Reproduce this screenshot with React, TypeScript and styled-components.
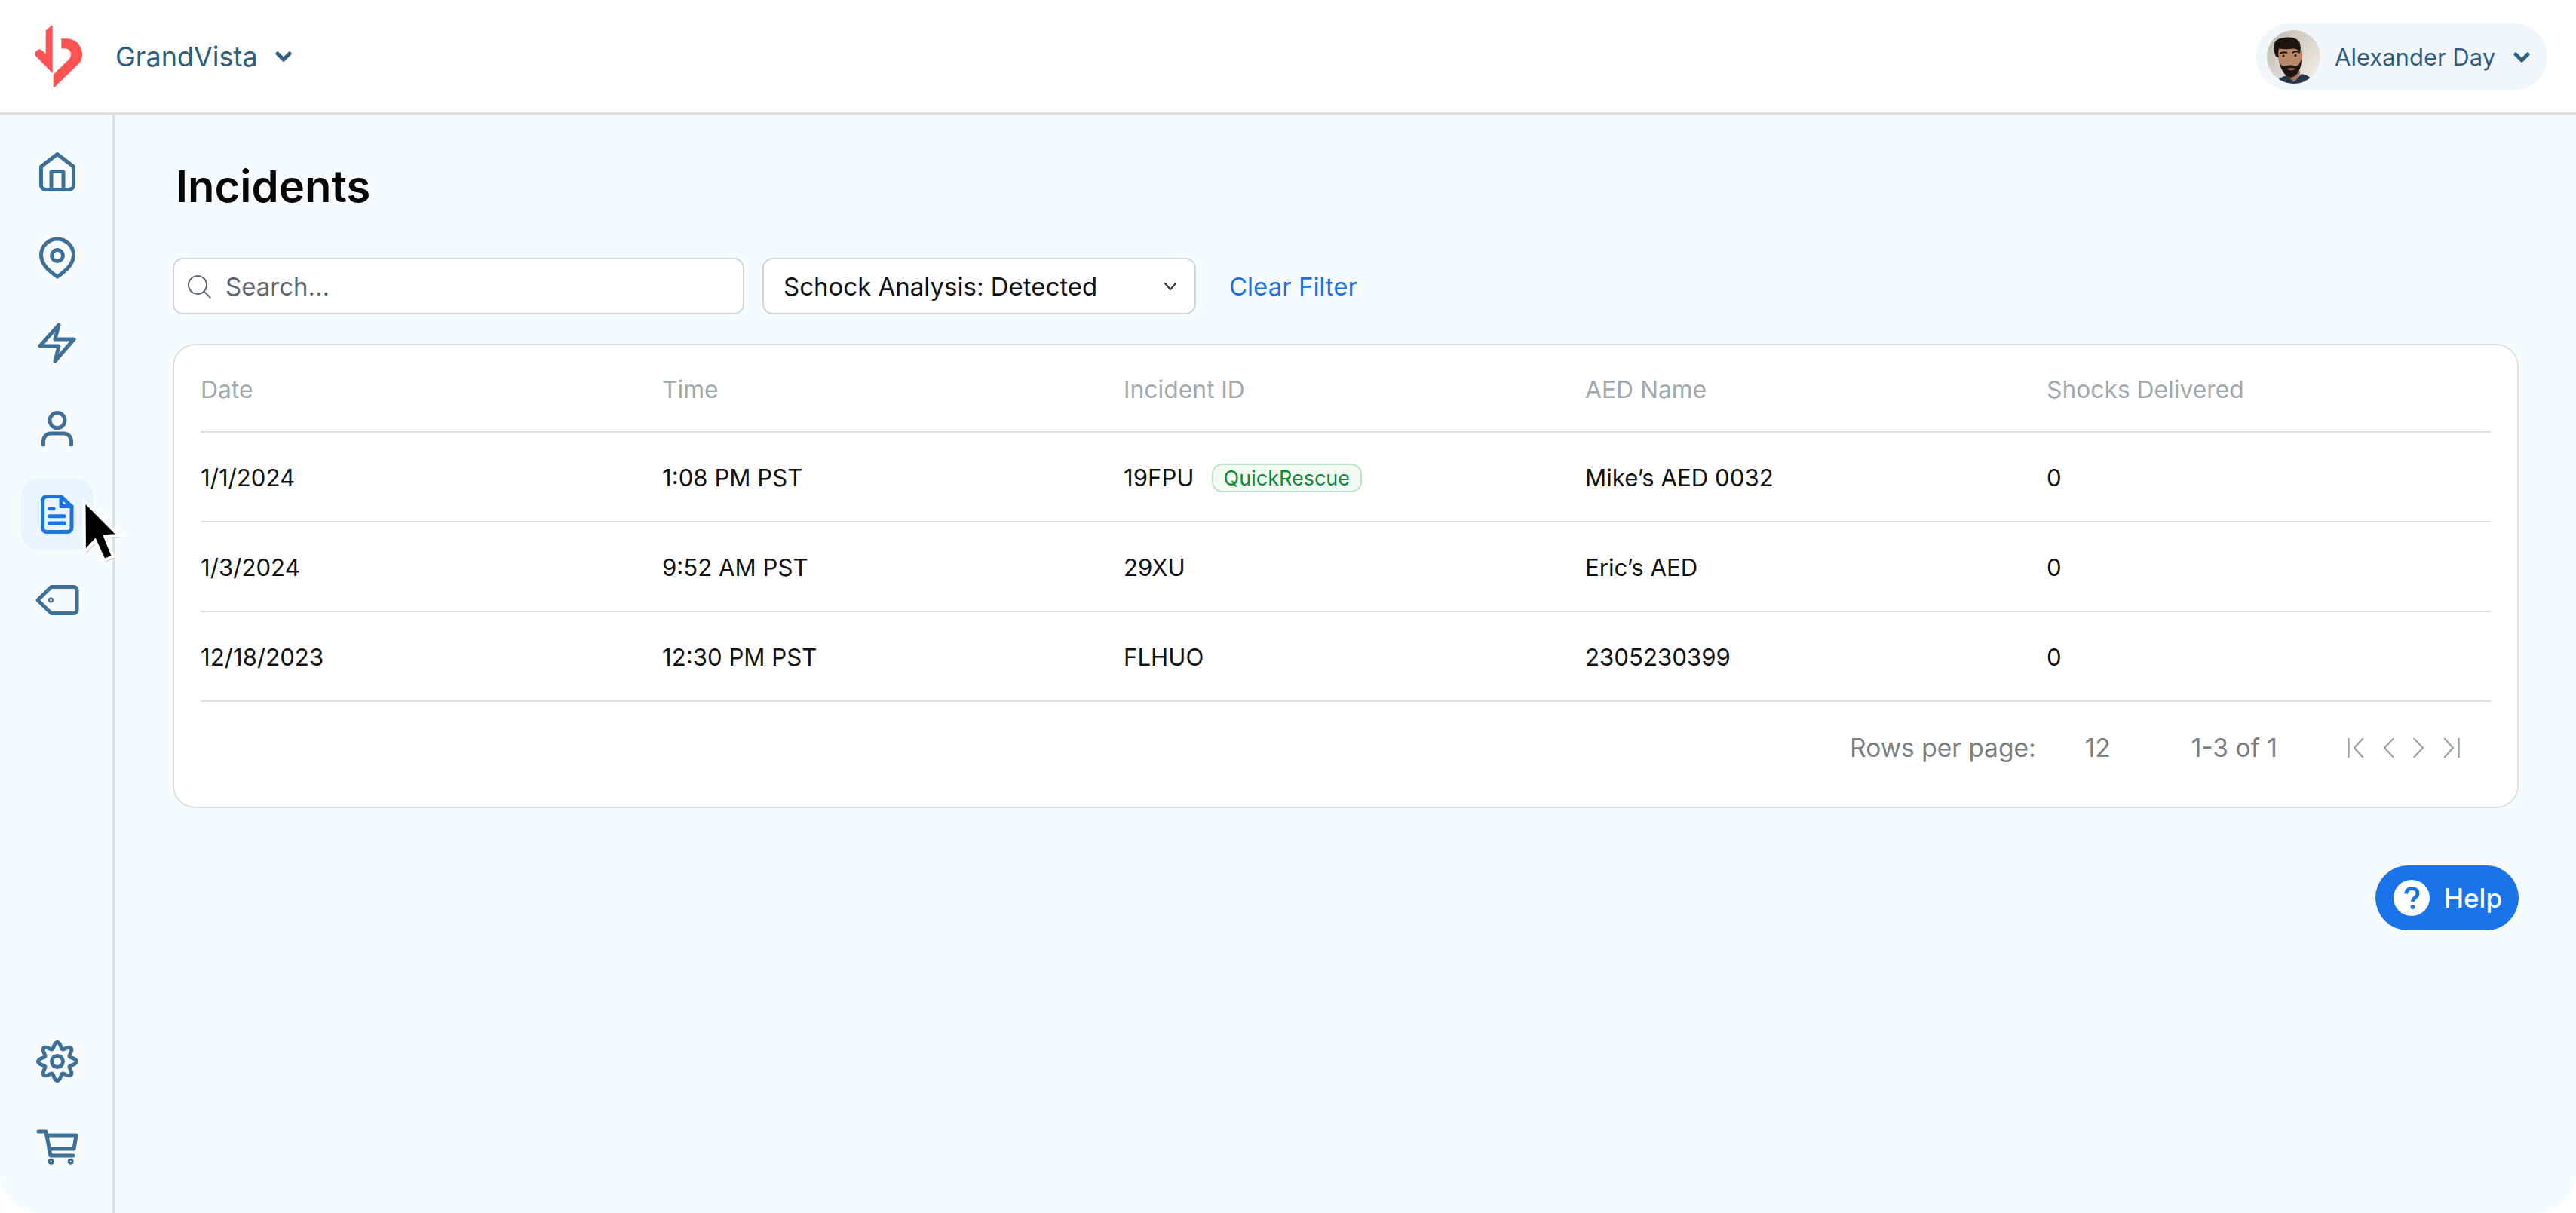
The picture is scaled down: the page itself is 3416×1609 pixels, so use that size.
import styled, { createGlobalStyle } from "styled-components";

const GlobalStyle = createGlobalStyle`
  html, body {
    margin: 0;
    padding: 0;
    background: #fff;
  }
  * {
    box-sizing: border-box;
  }
`;

const Frame = styled.div`
  position: relative;
  width: 3416px;
  height: 1609px;
  background: #f8fbfe;
  border-radius: 0 0 50px 50px;
  overflow: hidden;
  display: flex;
  flex-direction: column;
  font-family: Inter, "Liberation Sans", sans-serif;
  color: #111;
`;

const TopBar = styled.header`
  height: 152px;
  flex: none;
  background: #fff;
  border-bottom: 3px solid #dcdfe0;
  display: flex;
  align-items: center;
  padding: 0 38px 0 45px;
`;

const OrgName = styled.span`
  margin-left: 43px;
  font-size: 36px;
  color: #2b5f83;
`;

const OrgChevron = styled.svg`
  margin-left: 23px;
  width: 22px;
  height: 14px;
`;

const UserPill = styled.div`
  margin-left: auto;
  margin-top: 2px;
  width: 386px;
  height: 89px;
  border-radius: 45px;
  background: #f2f6fa;
  display: flex;
  align-items: center;
  padding-left: 14px;
`;

const Avatar = styled.svg`
  width: 71px;
  height: 71px;
  border-radius: 50%;
  flex: none;
`;

const UserName = styled.span`
  margin-left: 19px;
  font-size: 31px;
  color: #2b5f83;
  white-space: nowrap;
`;

const UserChevron = styled.svg`
  margin-left: 24px;
  width: 22px;
  height: 14px;
`;

const Body = styled.div`
  flex: 1;
  display: flex;
  min-height: 0;
`;

const Side = styled.nav`
  width: 152px;
  flex: none;
  border-right: 3px solid #dcdfe0;
  padding: 28px 0 39px 28px;
  display: flex;
  flex-direction: column;
  gap: 17.6px;
`;

const NavItem = styled.div<{ $active?: boolean }>`
  width: 96px;
  height: 96px;
  flex: none;
  border-radius: 24px;
  display: flex;
  align-items: center;
  justify-content: center;
  background: ${(p) => (p.$active ? "#e9f4ff" : "transparent")};
  color: ${(p) => (p.$active ? "#1a73e8" : "#3c7099")};
  svg {
    display: block;
    fill: none;
    stroke: currentColor;
    stroke-width: 5;
    stroke-linecap: round;
    stroke-linejoin: round;
  }
`;

const SideSpacer = styled.div`
  flex: 1;
`;

const Main = styled.main`
  flex: 1;
  min-width: 0;
  padding: 63px 76px 0 77px;
`;

const Title = styled.h1`
  margin: 0;
  height: 64px;
  font-size: 58px;
  line-height: 64px;
  font-weight: 600;
  color: #060606;
  padding-left: 4px;
`;

const Toolbar = styled.div`
  margin-top: 63px;
  display: flex;
  align-items: center;
  gap: 24px;
`;

const SearchBox = styled.div`
  width: 758px;
  height: 75px;
  background: #fff;
  border: 2px solid #cfd5dc;
  border-radius: 14px;
  display: flex;
  align-items: center;
  padding-left: 17px;
  font-size: 33px;
  color: #5d6873;
  svg {
    margin-right: 19px;
  }
`;

const FilterSelect = styled.div`
  width: 575px;
  height: 75px;
  background: #fff;
  border: 2px solid #cfd5dc;
  border-radius: 14px;
  display: flex;
  align-items: center;
  justify-content: space-between;
  padding: 0 23px 0 26px;
  font-size: 33px;
  color: #111;
`;

const ClearFilter = styled.a`
  margin-left: 20px;
  font-size: 33px;
  color: #1a6fe3;
`;

const Card = styled.section`
  margin-top: 39px;
  height: 616px;
  background: #fff;
  border: 2px solid #dedfe0;
  border-radius: 30px;
  padding: 0 35px;
`;

const Row = styled.div<{ $head?: boolean }>`
  height: ${(p) => (p.$head ? "116px" : "119px")};
  padding-top: 3px;
  display: grid;
  grid-template-columns: repeat(4, 612px) 1fr;
  align-items: center;
  border-bottom: 2px solid #dedfe0;
  font-size: ${(p) => (p.$head ? "31.8px" : "31.2px")};
  color: ${(p) => (p.$head ? "#a0a9ae" : "#111")};
`;

const IdCell = styled.div`
  display: flex;
  align-items: center;
  gap: 23px;
`;

const Badge = styled.span`
  height: 38px;
  padding: 0 14px;
  display: inline-flex;
  align-items: center;
  border: 2px solid #b9e4c6;
  border-radius: 14px;
  background: #f1faf3;
  color: #0b8c3a;
  font-size: 27px;
`;

const Pager = styled.div`
  height: 122px;
  display: flex;
  align-items: center;
  font-size: 33.5px;
  color: #7b7f80;
`;

const RowsLabel = styled.span`
  margin-left: auto;
`;

const RowsValue = styled.span`
  margin-left: 65px;
`;

const RangeLabel = styled.span`
  margin-left: 107px;
`;

const PagerIcons = styled.div`
  margin-left: 93px;
  margin-right: 41px;
  display: flex;
  align-items: center;
  gap: 25px;
  svg {
    display: block;
    fill: none;
    stroke: #9aa6a9;
    stroke-width: 2.5;
    stroke-linecap: round;
    stroke-linejoin: round;
  }
`;

const HelpRow = styled.div`
  margin-top: 76px;
  display: flex;
  justify-content: flex-end;
`;

const HelpButton = styled.button`
  width: 190px;
  height: 86px;
  border: 0;
  border-radius: 43px;
  background: #1a73e8;
  color: #fff;
  display: flex;
  align-items: center;
  padding: 0 0 0 24px;
  gap: 19px;
  font-family: inherit;
  font-size: 35px;
  font-weight: 500;
`;

const Pointer = styled.svg`
  position: absolute;
  left: 104px;
  top: 658px;
  width: 64px;
  height: 92px;
`;

const columns = ["Date", "Time", "Incident ID", "AED Name", "Shocks Delivered"];

const incidents = [
  { date: "1/1/2024", time: "1:08 PM PST", id: "19FPU", aed: "Mike’s AED 0032", shocks: "0", quick: true },
  { date: "1/3/2024", time: "9:52 AM PST", id: "29XU", aed: "Eric’s AED", shocks: "0" },
  { date: "12/18/2023", time: "12:30 PM PST", id: "FLHUO", aed: "2305230399", shocks: "0" },
];

// rounded 8 tooth outline for the settings icon
const gearPath = () => {
  const pts: string[] = [];
  for (let i = 0; i < 144; i++) {
    const a = (i / 144) * Math.PI * 2;
    const r = 21.5 + 4 * Math.cos(8 * a);
    pts.push(`${(29 + r * Math.sin(a)).toFixed(2)} ${(29 - r * Math.cos(a)).toFixed(2)}`);
  }
  return `M${pts.join("L")}Z`;
};

const Chevron = () => (
  <path d="M3 3l8 8 8-8" fill="none" stroke="#2b5f83" strokeWidth="5" strokeLinecap="round" strokeLinejoin="round" />
);

export default function App() {
  return (
    <>
      <GlobalStyle />
      <Frame>
        <TopBar>
          <svg width="65" height="86" viewBox="46 33 65 86">
            <path
              fill="#ff5252"
              d="M61.7 41.7L69 35Q70.7 33.5 70.7 36V98.3L48.5 75.5Q46 72 48.5 69L51 67Q54 65 57 68L61.7 72.5Z"
            />
            <path
              fill="#ff5252"
              d="M82.3 52.3H90C101 52.3 110 62 110 73C110 79 108 83 105 86L73 117Q71.7 118 71.7 116V100L93 79C97 74 95 66 88 65.5H82.3Z"
            />
          </svg>
          <OrgName>GrandVista</OrgName>
          <OrgChevron viewBox="0 0 22 14">
            <Chevron />
          </OrgChevron>
          <UserPill>
            <Avatar viewBox="0 0 71 71">
              <defs>
                <linearGradient id="wall" x1="0" y1="0" x2="1" y2="1">
                  <stop offset="0" stopColor="#bdb9b0" />
                  <stop offset="0.55" stopColor="#dbd8d1" />
                  <stop offset="1" stopColor="#f6f4ef" />
                </linearGradient>
              </defs>
              <rect width="71" height="71" fill="url(#wall)" />
              <path d="M12 71C14 64 22 60 30 60L36 68L46 58C52 59 56 61 58 64V71Z" fill="#27354f" />
              <path d="M26 54H44V59L36 68L27 61Z" fill="#a8755c" />
              <path d="M14 28C14 20 46 20 47 30C48 42 44 56 33 62C22 60 15 45 14 28Z" fill="#bb8769" />
              <path d="M16 40C18 46 20 48 24 48C28 46 34 46 38 48C42 47 44 44 46 38C46 50 42 60 32 63C24 62 18 52 16 40Z" fill="#1e1611" />
              <path d="M27 51C30 50 35 50 38 51C36 54 29 54 27 51Z" fill="#a9615a" />
              <path d="M17 31C20 29 24 29 27 30M34 30C37 28 41 28 44 30" stroke="#1b120c" strokeWidth="2" fill="none" />
              <circle cx="22" cy="34" r="1.600" fill="#1b120c" />
              <circle cx="38" cy="33.500" r="1.600" fill="#1b120c" />
              <path d="M12 35C7 22 9 13 18 11C28 8 42 9 44 18C45 22 45 26 44 29C40 24 36 24 30 25C24 26 18 24 16 25C15 28 15 32 16 36Z" fill="#1c1512" />
            </Avatar>
            <UserName>Alexander Day</UserName>
            <UserChevron viewBox="0 0 22 14">
              <Chevron />
            </UserChevron>
          </UserPill>
        </TopBar>
        <Body>
          <Side>
            <NavItem>
              <svg width="48" height="52" viewBox="0 0 48 52">
                <path d="M24 2.500L45.500 19V43a6 6 0 0 1-6 6.500H8.500a6 6 0 0 1-6-6.500V19Z" />
                <path d="M16 49V27a1.500 1.500 0 0 1 1.500-1.500h13A1.500 1.500 0 0 1 32 27v22" />
              </svg>
            </NavItem>
            <NavItem>
              <svg width="48" height="56" viewBox="0 0 48 56">
                <path d="M24 53C14 46 2.500 37 2.500 24.500A21.500 21.500 0 0 1 45.500 24.500C45.500 37 34 46 24 53Z" />
                <circle cx="24" cy="25" r="7.500" />
              </svg>
            </NavItem>
            <NavItem>
              <svg width="52" height="54" viewBox="0 0 52 54">
                <path d="M28 3L3 31H28L23 51L48 22H23Z" />
              </svg>
            </NavItem>
            <NavItem>
              <svg width="52" height="49" viewBox="0 0 52 49">
                <circle cx="26" cy="13.600" r="10" />
                <path d="M7.500 46V41a10 10 0 0 1 10-10H34.500a10 10 0 0 1 10 10V46" />
              </svg>
            </NavItem>
            <NavItem $active>
              <svg width="44" height="52" viewBox="0 0 44 52">
                <path d="M8 2.500H27L41 16V44a5.500 5.500 0 0 1-5.500 5.500H8A5.500 5.500 0 0 1 2.500 44V8A5.500 5.500 0 0 1 8 2.500Z" />
                <path d="M27 3V15.500H41" />
                <path d="M12 18.700H17M12 28.700H31M12 38H31" />
              </svg>
            </NavItem>
            <NavItem>
              <svg width="58" height="42" viewBox="0 0 58 42">
                <path d="M3 21L21 3.500H51a4 4 0 0 1 4 4V34.500a4 4 0 0 1-4 4H21Z" />
                <circle cx="20.500" cy="21" r="1" />
              </svg>
            </NavItem>
            <SideSpacer />
            <NavItem>
              <svg width="58" height="58" viewBox="0 0 58 58">
                <path d={gearPath()} />
                <circle cx="29" cy="29" r="7.500" />
              </svg>
            </NavItem>
            <NavItem>
              <svg width="56" height="48" viewBox="0 0 56 48">
                <path d="M3 3H13L19 35H49" />
                <path d="M14 8H53L50 26H17" />
                <circle cx="19.700" cy="42.700" r="1.500" />
                <circle cx="45.700" cy="42.700" r="1.500" />
              </svg>
            </NavItem>
          </Side>
          <Main>
            <Title>Incidents</Title>
            <Toolbar>
              <SearchBox>
                <svg width="32" height="32" viewBox="0 0 24 24" fill="none" stroke="#5d6873" strokeWidth="1.500" strokeLinecap="round">
                  <circle cx="10.500" cy="10.500" r="9" />
                  <path d="M17 17l6 6" />
                </svg>
                Search...
              </SearchBox>
              <FilterSelect>
                Schock Analysis: Detected
                <svg width="18" height="12" viewBox="0 0 18 12" fill="none" stroke="#333" strokeWidth="2" strokeLinecap="round" strokeLinejoin="round">
                  <path d="M2 2l7 8 7-8" />
                </svg>
              </FilterSelect>
              <ClearFilter>Clear Filter</ClearFilter>
            </Toolbar>
            <Card>
              <Row $head>
                {columns.map((c) => (
                  <div key={c}>{c}</div>
                ))}
              </Row>
              {incidents.map((row) => (
                <Row key={row.id}>
                  <div>{row.date}</div>
                  <div>{row.time}</div>
                  <IdCell>
                    {row.id}
                    {row.quick && <Badge>QuickRescue</Badge>}
                  </IdCell>
                  <div>{row.aed}</div>
                  <div>{row.shocks}</div>
                </Row>
              ))}
              <Pager>
                <RowsLabel>Rows per page:</RowsLabel>
                <RowsValue>12</RowsValue>
                <RangeLabel>1-3 of 1</RangeLabel>
                <PagerIcons>
                  <svg width="22" height="28" viewBox="0 0 22 28">
                    <path d="M1.500 2V26M20 2L9 14L20 26" />
                  </svg>
                  <svg width="15" height="28" viewBox="0 0 15 28">
                    <path d="M13.500 2L2 14L13.500 26" />
                  </svg>
                  <svg width="15" height="28" viewBox="0 0 15 28">
                    <path d="M1.500 2L13 14L1.500 26" />
                  </svg>
                  <svg width="22" height="28" viewBox="0 0 22 28">
                    <path d="M20.500 2V26M2 2L13 14L2 26" />
                  </svg>
                </PagerIcons>
              </Pager>
            </Card>
            <HelpRow>
              <HelpButton>
                <svg width="48" height="48" viewBox="0 0 48 48">
                  <circle cx="24" cy="24" r="24" fill="#fff" />
                  <path d="M16.500 18.500c.5-4.500 3.800-7 7.800-7 4.300 0 7.700 2.600 7.700 6.500 0 5.600-6.500 5.800-6.500 11" fill="none" stroke="#1a73e8" strokeWidth="5" />
                  <circle cx="25.500" cy="36" r="3" fill="#1a73e8" />
                </svg>
                Help
              </HelpButton>
            </HelpRow>
          </Main>
        </Body>
        <Pointer viewBox="0 0 64 92">
          <path d="M7.500 6L53 52L35 53L46 80L34 85L22 59L8 74Z" fill="#999" opacity="0.4" transform="translate(2 3)" />
          <path d="M7.500 6L53 52L35 53L46 80L34 85L22 59L8 74Z" fill="#000" stroke="#fff" strokeWidth="4" strokeLinejoin="miter" />
        </Pointer>
      </Frame>
    </>
  );
}
